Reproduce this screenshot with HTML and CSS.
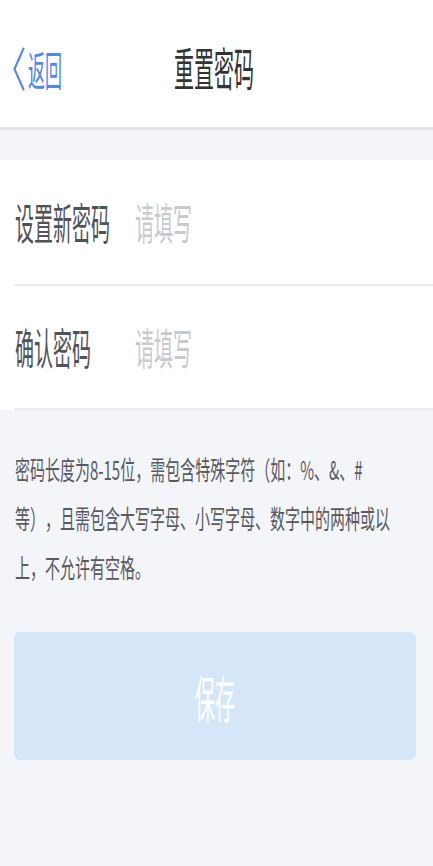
FILE: index.html
```html
<!DOCTYPE html>
<html lang="zh-CN">
<head>
<meta charset="utf-8">
<title>重置密码</title>
<link rel="stylesheet" href="styles.css">
</head>
<body>
<header class="nav">
  <a class="back" href="#">
    <svg class="chev" width="12" height="44" viewBox="0 0 12 44"><polyline points="10.5,1.5 1.5,22 10.5,42.5" fill="none" stroke="#4f86f2" stroke-width="2" stroke-linejoin="round" stroke-linecap="round"/></svg>
    <span class="tall back-text">返回</span>
  </a>
  <h1 class="title"><span class="tall">重置密码</span></h1>
</header>
<div class="gap"></div>
<form class="form">
  <div class="row">
    <label class="label"><span class="tall">设置新密码</span></label>
    <input class="field" type="password" placeholder="请填写">
  </div>
  <div class="row">
    <label class="label"><span class="tall">确认密码</span></label>
    <input class="field" type="password" placeholder="请填写">
  </div>
</form>
<div class="note">
  <p class="note-text">密码长度为8-15位，需包含特殊字符（如：%、&amp;、#<br>等），且需包含大写字母、小写字母、数字中的两种或以上，不允许有空格。</p>
</div>
<button class="save" type="button"><span class="tall save-text">保存</span></button>
</body>
</html>
```
FILE: styles.css
```css
html, body {
  margin: 0;
  padding: 0;
  background: #f4f5f9;
  font-family: "Noto Sans CJK SC", "Noto Sans", sans-serif;
  text-spacing-trim: space-all;
}
.tall {
  display: inline-block;
}
.nav {
  position: relative;
  height: 130px;
  box-sizing: border-box;
  background: #fff;
  border-bottom: 3px solid #e4e5e9;
  display: flex;
  align-items: center;
  justify-content: center;
  padding-top: 8px;
  padding-right: 5px;
}
.back {
  position: absolute;
  left: 13px;
  top: 47px;
  display: flex;
  align-items: center;
  gap: 3px;
  color: #4f86f2;
  text-decoration: none;
  font-size: 17px;
  line-height: 44px;
}
.back-text {
  transform: scaleY(2.4);
}
.title {
  margin: 0;
  font-size: 20px;
  font-weight: 400;
  color: #333;
  line-height: 30px;
}
.title .tall {
  transform: scaleY(2.3);
}
.gap {
  height: 30px;
}
.form {
  margin: 0;
  background: #fff;
}
.row {
  margin-left: 14px;
  padding-left: 1px;
  height: 126px;
  border-bottom: 2px solid #ebecef;
  display: flex;
  align-items: center;
  padding-bottom: 4px;
  box-sizing: border-box;
}
.row + .row {
  height: 124px;
}
.label {
  width: 120px;
  flex: none;
  font-size: 19px;
  color: #505259;
}
.label .tall {
  transform: scaleY(2.3);
}
.field {
  flex: 1;
  border: none;
  outline: none;
  background: transparent;
  font-family: inherit;
  font-size: 19px;
  padding: 0;
  color: #333;
  transform: scaleY(2.3);
  transform-origin: left center;
}
.field::placeholder {
  color: #c9cacf;
}
.note {
  height: 222px;
  padding: 35px 15px 0;
  box-sizing: border-box;
}
.note-text {
  margin: 0;
  font-size: 15px;
  line-height: 28px;
  color: #595a60;
  transform: scaleY(1.75);
  transform-origin: left top;
}
.save {
  display: flex;
  align-items: center;
  justify-content: center;
  margin-left: 14px;
  width: 402px;
  height: 128px;
  border: none;
  border-radius: 6px;
  background: #d5e6f8;
  color: #fff;
  font-family: inherit;
  font-size: 20px;
  padding: 0;
}
.save-text {
  transform: scaleY(2.5);
}
```
